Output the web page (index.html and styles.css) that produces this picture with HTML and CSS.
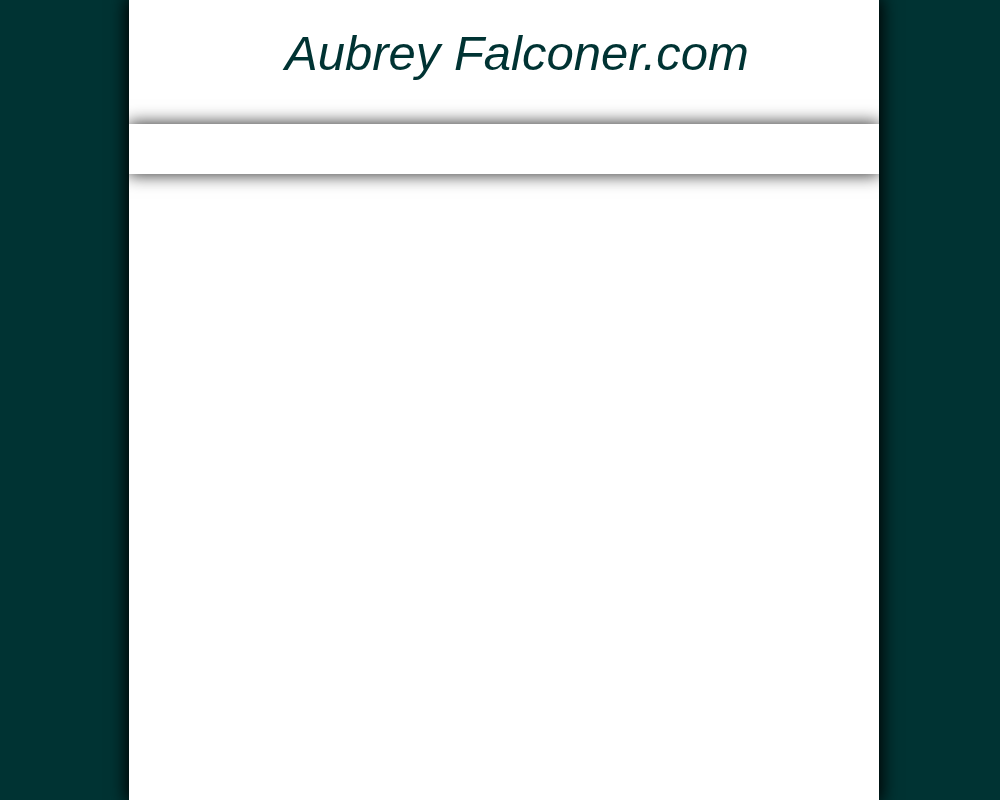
FILE: index.html
```html
<!DOCTYPE html>
<html>
<head>
<meta charset="utf-8">
<title>Aubrey Falconer.com</title>
<link rel="stylesheet" href="styles.css">
</head>
<body>
<div class="page">
  <header class="header">
    <h1 class="title">Aubrey Falconer.com</h1>
  </header>
  <nav class="nav"></nav>
  <main class="content"></main>
</div>
</body>
</html>
```

FILE: styles.css
```css
html, body {
  margin: 0;
  padding: 0;
  height: 100%;
}
body {
  background: #003333;
  font-family: "Liberation Sans", Arial, sans-serif;
}
.page {
  width: 750px;
  margin: 0 0 0 129px;
  min-height: 100%;
  background: #ffffff;
  box-shadow: 0 0 16px 3px #000000;
  overflow: hidden;
  display: flex;
  flex-direction: column;
}
.header {
  height: 124px;
  display: flex;
  justify-content: center;
  padding-left: 26px;
  box-sizing: border-box;
}
.title {
  margin: 23px 0 0 0;
  font-size: 49px;
  font-style: italic;
  font-weight: normal;
  color: #003333;
  line-height: 60px;
}
.nav {
  height: 50px;
  background: #ffffff;
  box-shadow: 0 0 16px 1px rgba(0,0,0,0.8);
  position: relative;
}
.content {
  flex: 1;
}
```
